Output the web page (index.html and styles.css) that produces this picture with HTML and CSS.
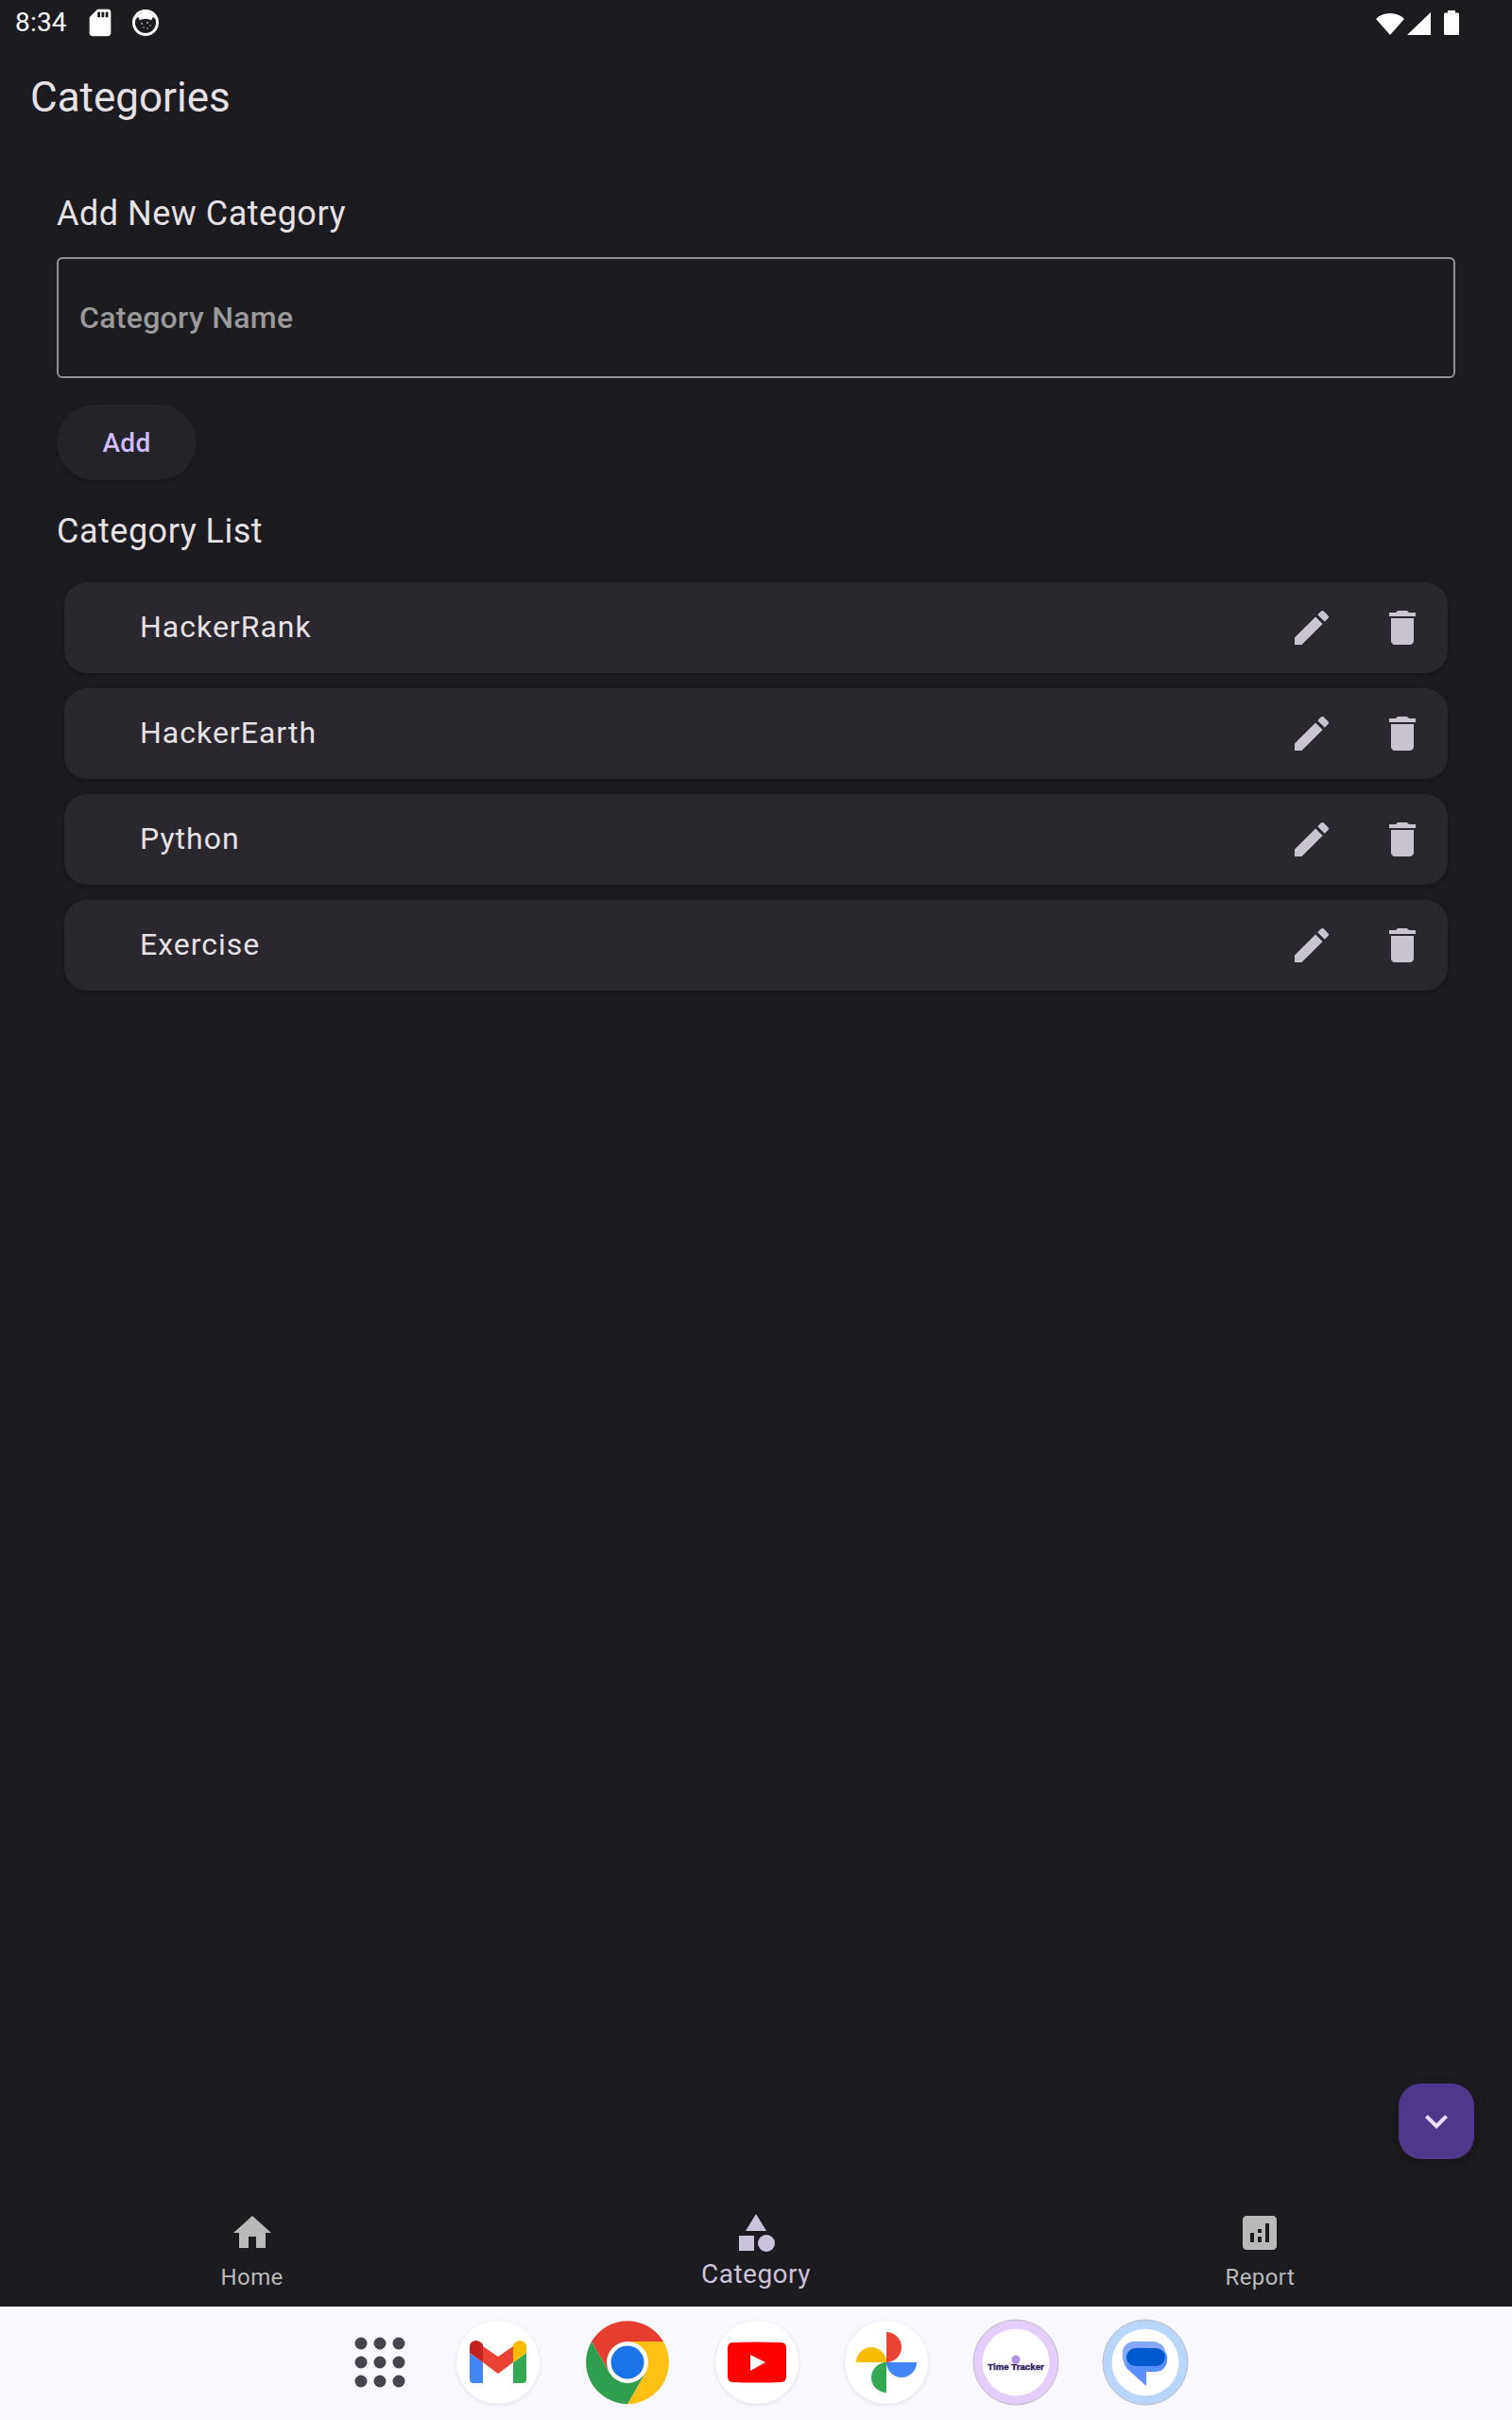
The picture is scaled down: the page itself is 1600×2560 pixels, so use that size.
FILE: index.html
```html
<!DOCTYPE html>
<html lang="en">
<head>
<meta charset="utf-8">
<title>Categories</title>
<link rel="stylesheet" href="styles.css">
</head>
<body>
<div class="app">
  <header class="status">
    <span class="status-time">8:34</span>
    <svg class="status-sd" viewBox="0 0 24 24"><path d="M18 2h-8L4.020 8 4 20c0 1.100.9 2 2 2h12c1.100 0 2-.9 2-2V4c0-1.100-.9-2-2-2zm-6 6h-2V4h2v4zm3 0h-2V4h2v4zm3 0h-2V4h2v4z"/></svg>
    <svg class="status-face" viewBox="-15 -15 30 30">
      <circle r="14" fill="#fff"/>
      <circle r="11" fill="#1c1b1f"/>
      <path d="M-10.500 -3.500A11 11 0 0 1 10.500 -3.500L8 -6 6 -2.500C3 -4.500-3-4.500-6-2.500L-8-6Z" fill="#fff"/>
      <g fill="#bbb"><circle cx="-4" cy="1" r=".9"/><circle cx="2" cy="0" r=".9"/><circle cx="5" cy="3" r=".8"/><circle cx="-2" cy="5" r=".8"/><circle cx="2" cy="6" r=".8"/></g>
    </svg>
    <div class="status-right">
      <svg class="status-wifi" viewBox="0 0 30 25"><path d="M15 25 0 8A22 22 0 0 1 30 8Z"/></svg>
      <svg class="status-signal" viewBox="0 0 25 24"><path d="M0 24 25 0V24Z"/></svg>
      <svg class="status-battery" viewBox="0 0 16 26"><path d="M4 0h8v2.500h2.500A1.500 1.500 0 0 1 16 4v20.500a1.500 1.500 0 0 1-1.500 1.500h-13A1.500 1.500 0 0 1 0 24.500V4a1.500 1.500 0 0 1 1.500-1.500H4Z"/></svg>
    </div>
  </header>

  <h1 class="page-title">Categories</h1>

  <main class="content">
    <h2 class="section-title section-title-add">Add New Category</h2>
    <div class="field"><span class="field-label">Category Name</span></div>
    <button class="add-button" type="button">Add</button>
    <h2 class="section-title section-title-list">Category List</h2>
    <ul class="list">
      <li class="card"><span class="card-name">HackerRank</span>
        <svg class="icon" viewBox="0 0 24 24"><path d="M3 17.250V21h3.750L17.810 9.940l-3.750-3.750L3 17.250zM20.710 7.040c.39-.39.39-1.020 0-1.410l-2.340-2.340c-.39-.39-1.020-.39-1.410 0l-1.830 1.830 3.750 3.750 1.830-1.830z"/></svg>
        <svg class="icon" viewBox="0 0 24 24"><path d="M6 19c0 1.100.9 2 2 2h8c1.100 0 2-.9 2-2V7H6v12zM19 4h-3.500l-1-1h-5l-1 1H5v2h14V4z"/></svg>
      </li>
      <li class="card"><span class="card-name">HackerEarth</span>
        <svg class="icon" viewBox="0 0 24 24"><path d="M3 17.250V21h3.750L17.810 9.940l-3.750-3.750L3 17.250zM20.710 7.040c.39-.39.39-1.020 0-1.410l-2.340-2.340c-.39-.39-1.020-.39-1.410 0l-1.830 1.830 3.750 3.750 1.830-1.830z"/></svg>
        <svg class="icon" viewBox="0 0 24 24"><path d="M6 19c0 1.100.9 2 2 2h8c1.100 0 2-.9 2-2V7H6v12zM19 4h-3.500l-1-1h-5l-1 1H5v2h14V4z"/></svg>
      </li>
      <li class="card"><span class="card-name">Python</span>
        <svg class="icon" viewBox="0 0 24 24"><path d="M3 17.250V21h3.750L17.810 9.940l-3.750-3.750L3 17.250zM20.710 7.040c.39-.39.39-1.020 0-1.410l-2.340-2.340c-.39-.39-1.020-.39-1.410 0l-1.830 1.830 3.750 3.750 1.830-1.830z"/></svg>
        <svg class="icon" viewBox="0 0 24 24"><path d="M6 19c0 1.100.9 2 2 2h8c1.100 0 2-.9 2-2V7H6v12zM19 4h-3.500l-1-1h-5l-1 1H5v2h14V4z"/></svg>
      </li>
      <li class="card"><span class="card-name">Exercise</span>
        <svg class="icon" viewBox="0 0 24 24"><path d="M3 17.250V21h3.750L17.810 9.940l-3.750-3.750L3 17.250zM20.710 7.040c.39-.39.39-1.020 0-1.410l-2.340-2.340c-.39-.39-1.020-.39-1.410 0l-1.830 1.830 3.750 3.750 1.830-1.830z"/></svg>
        <svg class="icon" viewBox="0 0 24 24"><path d="M6 19c0 1.100.9 2 2 2h8c1.100 0 2-.9 2-2V7H6v12zM19 4h-3.500l-1-1h-5l-1 1H5v2h14V4z"/></svg>
      </li>
    </ul>
  </main>

  <button class="fab" type="button" aria-label="Collapse">
    <svg class="fab-icon" viewBox="0 0 24 24"><path d="M16.590 8.590L12 13.170 7.410 8.590 6 10l6 6 6-6z"/></svg>
  </button>

  <nav class="nav">
    <div class="nav-item">
      <svg class="nav-icon" viewBox="0 0 24 24"><path d="M10 20v-6h4v6h5v-8h3L12 3 2 12h3v8z"/></svg>
      <span class="nav-label">Home</span>
    </div>
    <div class="nav-item nav-item-active">
      <svg class="nav-icon" viewBox="0 0 24 24"><path d="M12 2l-5.500 9h11z"/><circle cx="17.500" cy="17.500" r="4.500"/><path d="M3 13.500h8v8H3z"/></svg>
      <span class="nav-label">Category</span>
    </div>
    <div class="nav-item">
      <svg class="nav-icon" viewBox="0 0 24 24"><path d="M19 3H5c-1.100 0-2 .9-2 2v14c0 1.100.9 2 2 2h14c1.100 0 2-.9 2-2V5c0-1.100-.9-2-2-2zM9 17H7v-5h2v5zm4 0h-2v-3h2v3zm0-5h-2v-2h2v2zm4 5h-2V7h2v10z"/></svg>
      <span class="nav-label">Report</span>
    </div>
  </nav>

  <footer class="dock">
    <svg class="dock-icon dock-apps" viewBox="-46 -46 92 92" fill="#45454f">
      <circle cx="-20" cy="-20" r="6.500"/><circle cy="-20" r="6.500"/><circle cx="20" cy="-20" r="6.500"/>
      <circle cx="-20" r="6.500"/><circle r="6.500"/><circle cx="20" r="6.500"/>
      <circle cx="-20" cy="20" r="6.500"/><circle cy="20" r="6.500"/><circle cx="20" cy="20" r="6.500"/>
    </svg>
    <svg class="dock-icon dock-shadow" viewBox="-46 -46 92 92">
      <circle class="dock-disc" r="44"/>
      <path fill="#4285f4" d="M-30-10-16 0V22H-26Q-30 22-30 18Z"/>
      <path fill="#34a853" d="M30-10 16 0V22H26Q30 22 30 18Z"/>
      <path fill="#ea4335" d="M-16-17 0-6 16-17V0L0 12-16 0Z"/>
      <path fill="#c5221f" d="M-30-16Q-30-23-23-23-20-23-16-19V0L-30-10Z"/>
      <path fill="#fbbc04" d="M30-16Q30-23 23-23 20-23 16-19V0L30-10Z"/>
    </svg>
    <svg class="dock-icon" viewBox="-46 -46 92 92">
      <path fill="#e53e2f" d="M-38-22A44 44 0 0 1 38-22H0L-19 11Z"/>
      <path fill="#fdc014" d="M38-22A44 44 0 0 1 0 44L19 11 0-22Z"/>
      <path fill="#2f9e4f" d="M0 44A44 44 0 0 1-38-22L-19 11H19Z"/>
      <circle r="22" fill="#fff"/>
      <circle r="17.500" fill="#1a73e8"/>
    </svg>
    <svg class="dock-icon dock-shadow" viewBox="-46 -46 92 92">
      <circle class="dock-disc" r="44"/>
      <path fill="#f00" d="M-26-21Q0-22 26-21 31-20.500 31-15V15Q31 20.500 26 21 0 22-26 21-31 20.500-31 15V-15Q-31-20.500-26-21Z"/>
      <path fill="#fff" d="M-7-8 9 0-7 9Z"/>
    </svg>
    <svg class="dock-icon dock-shadow" viewBox="-46 -46 92 92">
      <circle class="dock-disc" r="44"/>
      <path fill="#ea4335" d="M0 0V-32A16 16 0 0 1 0 0Z"/>
      <path fill="#fbbc04" d="M0 0H-32A16 16 0 0 1 0 0Z"/>
      <path fill="#34a853" d="M0 0V32A16 16 0 0 1 0 0Z"/>
      <path fill="#4285f4" d="M0 0H32A16 16 0 0 1 0 0Z"/>
    </svg>
    <svg class="dock-icon" viewBox="-46 -46 92 92">
      <circle r="45" fill="#e4cdfb" stroke="#bdbbc4" stroke-width="1"/>
      <circle r="35.500" fill="#fff"/>
      <circle cy="-3" r="4.500" fill="#b18fe6"/>
      <text class="dock-logo-text" y="8" text-anchor="middle">Time Tracker</text>
    </svg>
    <svg class="dock-icon" viewBox="-46 -46 92 92">
      <circle r="45" fill="#b9d5fb" stroke="#bdbbc4" stroke-width="1"/>
      <circle r="35.500" fill="#fff"/>
      <path fill="#5b8eff" d="M-24-10A12 12 0 0 1-12-22H6C14-22 20-18 21-11 25-7 25 10 10 10H1V25L-19 7C-23 2-24-4-24-10Z"/>
      <path fill="#85a8ff" d="M-24-10A12 12 0 0 1-12-22H6C14-22 20-18 21-11 14-16-10-16-12-15-18-13-21-7-19 4-23 0-24-5-24-10Z"/>
      <path fill="#0059cf" d="M-10-15H11A10 9.500 0 0 1 11 4H-10A10 9.500 0 0 1-10-15Z"/>
    </svg>
  </footer>
</div>
</body>
</html>
```
FILE: styles.css
```css
* { box-sizing: border-box; }
html, body { margin: 0; padding: 0; }
body {
  background: #1c1b1f;
  color: #e6e1e5;
  font-family: Roboto, "Noto Sans", sans-serif;
}
.app {
  position: relative;
  display: flex;
  flex-direction: column;
  width: 1600px;
  height: 2560px;
  overflow: hidden;
}
.status {
  display: flex;
  align-items: center;
  height: 48px;
  flex: none;
  padding-left: 16px;
  color: #fff;
}
.status svg { display: block; fill: #fff; flex: none; }
.status-time { font-size: 28px; line-height: 48px; width: 73px; letter-spacing: .2px; }
.status-sd { width: 34px; height: 34px; }
.status-face { width: 30px; height: 30px; margin-left: 16px; }
.status-right {
  display: flex;
  align-items: flex-end;
  margin-left: auto;
  padding-right: 56px;
  height: 26px;
}
.status-wifi { width: 30px; height: 25px; }
.status-signal { width: 25px; height: 24px; margin-left: 3px; }
.status-battery { width: 16px; height: 26px; margin-left: 14px; }
.page-title {
  margin: 25px 0 0;
  padding-left: 32px;
  font-size: 44px;
  line-height: 60px;
  font-weight: 400;
}
.content {
  flex: 1;
  padding: 69px 60px 0;
}
.section-title {
  margin: 0;
  font-size: 36px;
  line-height: 48px;
  font-weight: 400;
  letter-spacing: .5px;
}
.section-title-list { margin-top: 30px; }
.field {
  display: flex;
  align-items: center;
  height: 128px;
  margin-top: 22px;
  padding-left: 22px;
  border: 2px solid #938f99;
  border-radius: 6px;
}
.field-label {
  font-size: 32px;
  font-weight: 500;
  letter-spacing: .3px;
  color: #9a9a9a;
}
.add-button {
  display: block;
  width: 148px;
  height: 80px;
  margin-top: 28px;
  padding: 0;
  border: 0;
  border-radius: 40px;
  background: #25232a;
  color: #d0bcff;
  font-family: inherit;
  font-size: 28px;
  font-weight: 500;
  letter-spacing: .3px;
  box-shadow: 0 2px 4px rgba(0, 0, 0, .2);
}
.list {
  display: flex;
  flex-direction: column;
  gap: 16px;
  margin: 30px 8px 0;
  padding: 0;
  list-style: none;
}
.card {
  display: flex;
  align-items: center;
  gap: 48px;
  height: 96px;
  padding: 0 24px 0 80px;
  border-radius: 24px;
  background: #2a282e;
  box-shadow: 0 2px 5px rgba(0, 0, 0, .25);
}
.card-name {
  flex: 1;
  font-size: 32px;
  line-height: 44px;
  letter-spacing: 1px;
  margin-top: -2px;
}
.icon { display: block; width: 48px; height: 48px; fill: #cac4d0; flex: none; }
.fab {
  position: absolute;
  right: 40px;
  bottom: 276px;
  display: flex;
  align-items: center;
  justify-content: center;
  width: 80px;
  height: 80px;
  padding: 0;
  border: 0;
  border-radius: 24px;
  background: #4f378b;
  box-shadow: 0 6px 14px rgba(0, 0, 0, .3);
}
.fab-icon { display: block; width: 48px; height: 48px; fill: #eaddff; }
.nav {
  display: grid;
  grid-template-columns: repeat(3, 1fr);
  flex: none;
  height: 102px;
}
.nav-item {
  display: flex;
  flex-direction: column;
  align-items: center;
  color: #b9b9b9;
}
.nav-icon { display: block; width: 48px; height: 48px; fill: currentColor; flex: none; }
.nav-label {
  margin-top: 9px;
  font-size: 24px;
  line-height: 28px;
  letter-spacing: .4px;
}
.nav-item-active { color: #cbc2db; }
.nav-item-active .nav-label { margin-top: 6px; font-size: 28px; letter-spacing: .5px; }
.dock {
  display: flex;
  align-items: center;
  flex: none;
  gap: 45px;
  height: 120px;
  padding: 0 0 2px 356px;
  background: #f9f8ff;
}
.dock-icon { display: block; width: 92px; height: 92px; flex: none; overflow: visible; }
.dock-shadow { filter: drop-shadow(0 1px 2px rgba(60, 60, 90, .14)); }
.dock-apps { margin-right: -12px; }
.dock-disc { fill: #fff; }
.dock-logo-text {
  font-family: "Liberation Sans", Arial, sans-serif;
  font-size: 9.500px;
  font-weight: 700;
  fill: #2f1b5e;
  stroke: #2f1b5e;
  stroke-width: .45;
  letter-spacing: .1px;
}
```
